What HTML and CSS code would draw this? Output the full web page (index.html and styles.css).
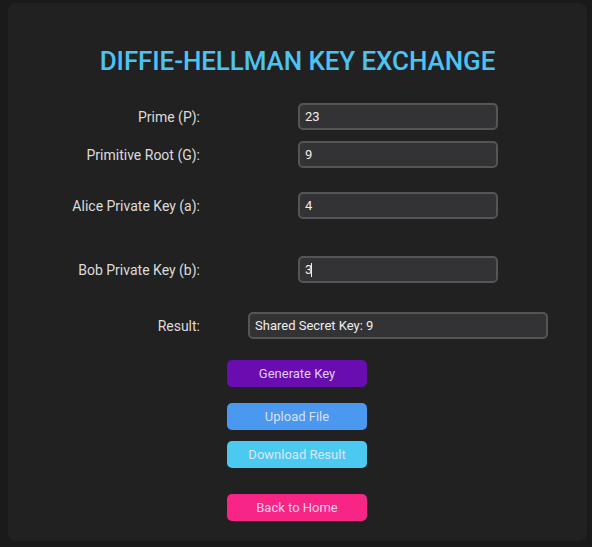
FILE: index.html
```html
<!DOCTYPE html>
<html lang="en">
<head>
<meta charset="utf-8">
<title>Diffie-Hellman Key Exchange</title>
<link rel="stylesheet" href="styles.css">
</head>
<body>
<main class="card">
  <h1 class="title">DIFFIE-HELLMAN KEY EXCHANGE</h1>
  <div class="row row-p">
    <label class="label" for="p">Prime (P):</label>
    <div class="field"><input id="p" class="input" type="text" value="23"></div>
  </div>
  <div class="row row-g">
    <label class="label" for="g">Primitive Root (G):</label>
    <div class="field"><input id="g" class="input" type="text" value="9"></div>
  </div>
  <div class="row row-a">
    <label class="label" for="a">Alice Private Key (a):</label>
    <div class="field"><input id="a" class="input" type="text" value="4"></div>
  </div>
  <div class="row row-b">
    <label class="label" for="b">Bob Private Key (b):</label>
    <div class="field"><div class="input-wrap"><input id="b" class="input" type="text" value="3"><span class="caret"></span></div></div>
  </div>
  <div class="row row-r">
    <label class="label" for="r">Result:</label>
    <div class="field"><input id="r" class="input input-wide" type="text" value="Shared Secret Key: 9" readonly></div>
  </div>
  <div class="actions">
    <button class="btn btn-generate">Generate Key</button>
    <button class="btn btn-upload">Upload File</button>
    <button class="btn btn-download">Download Result</button>
    <button class="btn btn-home">Back to Home</button>
  </div>
</main>
</body>
</html>
```
FILE: styles.css
```css
* { box-sizing: border-box; }
html, body { margin: 0; padding: 0; }
body {
  background: #1a1a1a;
  font-family: Roboto, "Liberation Sans", sans-serif;
  color: #dcdcdc;
  height: 547px;
  overflow: hidden;
}
.card {
  margin: 3px 5px 0 8px;
  height: 538px;
  background: #212121;
  border-radius: 8px;
  padding-top: 40px;
}
.title {
  margin: 0 0 24px;
  text-align: center;
  font-size: 26px;
  font-weight: 500;
  line-height: 36px;
  color: #4cc3f2;
  letter-spacing: -0.1px;
}
.row {
  display: flex;
  align-items: center;
  height: 27px;
}
.row-g { margin-top: 11px; }
.row-a { margin-top: 24px; }
.row-b { margin-top: 37px; }
.row-r { margin-top: 29px; }
.label {
  width: 192px;
  text-align: right;
  font-size: 14px;
  color: #dcdcdc;
}
.field {
  margin-left: 98px;
  width: 200px;
  display: flex;
  justify-content: center;
}
.input-wrap { position: relative; }
.input {
  width: 200px;
  height: 27px;
  background: #333335;
  border: 2px solid #555557;
  border-radius: 5px;
  color: #eeeeee;
  font-family: Roboto, "Liberation Sans", sans-serif;
  font-size: 13px;
  padding: 0 5px;
  outline: none;
  flex-shrink: 0;
}
.input-wide { width: 300px; }
.caret {
  position: absolute;
  left: 13px;
  top: 7px;
  width: 1px;
  height: 14px;
  background: #f0f0f0;
}
.actions {
  display: flex;
  flex-direction: column;
  align-items: flex-start;
  padding-left: 219px;
  margin-top: 21px;
}
.btn {
  width: 140px;
  height: 27px;
  border: none;
  border-radius: 5px;
  font-family: Roboto, "Liberation Sans", sans-serif;
  font-size: 13px;
  color: rgba(240, 236, 255, 0.88);
  padding: 0;
}
.btn-generate { background: #6a0db0; }
.btn-upload { background: #4b98f0; margin-top: 16px; }
.btn-download { background: #4bc9f0; margin-top: 11px; }
.btn-home { background: #f72585; margin-top: 26px; }
```
